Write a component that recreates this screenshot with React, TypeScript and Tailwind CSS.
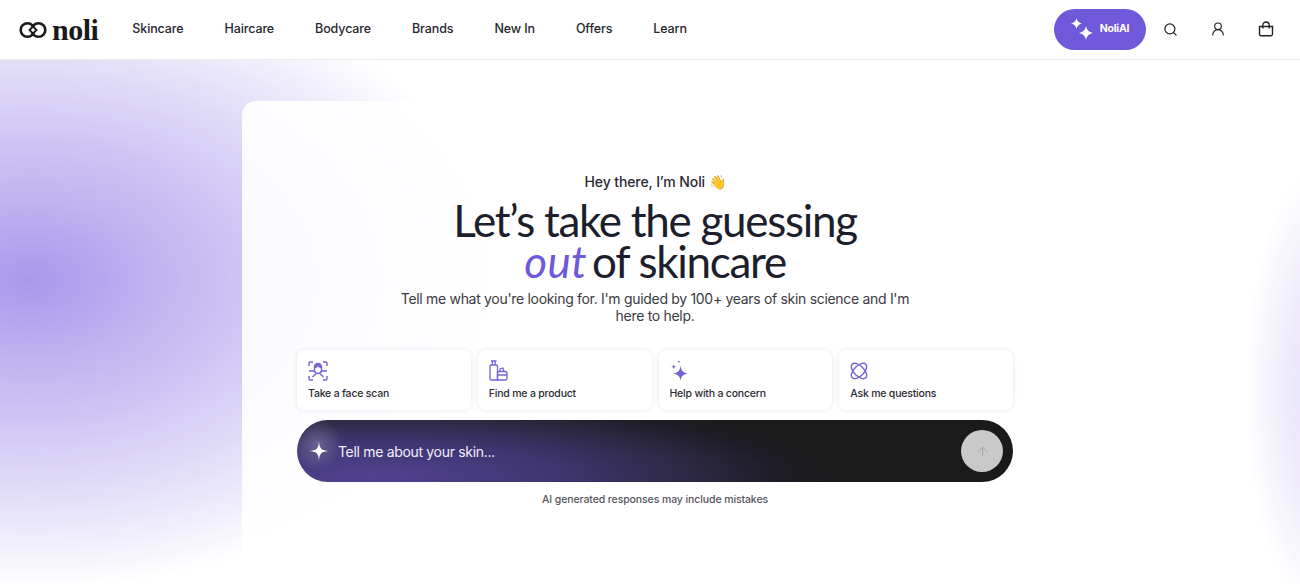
import { Search, UserRound, ArrowUp } from "lucide-react";

const NAV = ["Skincare", "Haircare", "Bodycare", "Brands", "New In", "Offers", "Learn"];

function Sparkle({ className }: { className?: string }) {
  return (
    <svg viewBox="0 0 24 24" className={className} fill="currentColor">
      <path d="M12 0C12.400 9 15 11.600 24 12 15 12.400 12.400 15 12 24 11.600 15 9 12.400 0 12 9 11.600 11.600 9 12 0z" />
    </svg>
  );
}

function FatSparkle({ className }: { className?: string }) {
  return (
    <svg viewBox="0 0 24 24" className={className} fill="currentColor">
      <path d="M12 0c1.200 6.500 4.500 10.300 12 12-7.500 1.700-10.800 5.500-12 12-1.200-6.500-4.500-10.300-12-12 7.500-1.700 10.800-5.500 12-12z" />
    </svg>
  );
}

function Logo() {
  return (
    <div className="flex items-center gap-[5px]">
      <svg width="28" height="18" viewBox="0 0 28 18" fill="none" stroke="#1a1a1a" strokeWidth="2.600">
        <circle cx="8.500" cy="9" r="6.800" />
        <circle cx="19.500" cy="9" r="6.800" />
        <path d="M14 5.500 17.500 9 14 12.500 10.500 9z" fill="#fff" strokeWidth="1.800" />
      </svg>
      <span className="font-['Liberation_Serif',serif] text-[30px] leading-none font-bold tracking-[-0.5px] text-[#1a1a1a]">
        noli
      </span>
    </div>
  );
}

function BagIcon() {
  return (
    <svg width="16" height="16" viewBox="0 0 16 16" fill="none" stroke="#222" strokeWidth="1.400">
      <path d="M1.500 5.500h13v7.500a1.800 1.800 0 0 1-1.800 1.800H3.300A1.800 1.800 0 0 1 1.500 13z" />
      <path d="M4.800 7.500V4.200a3.200 3.200 0 0 1 6.400 0v3.300" />
    </svg>
  );
}

function FaceIcon() {
  return (
    <svg width="20" height="20" viewBox="0 0 20 20" fill="none" stroke="#7563d6" strokeWidth="1.400">
      <path d="M1 5V2.300A1.300 1.300 0 0 1 2.300 1H5M15 1h2.700A1.300 1.300 0 0 1 19 2.300V5M1 15v2.700A1.300 1.300 0 0 0 2.300 19H5M15 19h2.700a1.300 1.300 0 0 0 1.300-1.300V15" />
      <path d="M6.500 6a3.500 3.500 0 0 1 7 0v3a3.500 3.500 0 0 1-7 0z" />
      <path d="M6.500 7.200C8.500 7 9.500 6.300 10 5.200c.5 1.100 1.500 1.800 3.500 2V5L12 2.800H8L6.500 5z" fill="#7563d6" stroke="none" />
      <path d="M1 10h4.800l1.700 1.500M19 10h-4.800l-1.700 1.500M4.500 16l3.500-3.200M15.500 16 12 12.800" />
    </svg>
  );
}

function BottleIcon() {
  return (
    <svg width="19" height="21" viewBox="0 0 19 21" fill="none" stroke="#7563d6" strokeWidth="1.300">
      <path d="M2 1h5.500M3.300 1v4M6.200 1v4" />
      <path d="M2.300 5h4.900A1.300 1.300 0 0 1 8.500 6.300v5.200A2 2 0 0 0 8.500 13v7H2.300A1.300 1.300 0 0 1 1 18.700V6.300A1.300 1.300 0 0 1 2.300 5z" />
      <path d="M8.500 13.500a2 2 0 0 1 2-2h6A1.500 1.500 0 0 1 18 13v5.500a1.500 1.500 0 0 1-1.500 1.500h-8z" />
      <path d="M11 11.500V9l3-1 .8 3.500M8.500 15h9.500" />
    </svg>
  );
}

function StarsIcon() {
  return (
    <svg width="19" height="21" viewBox="0 0 19 21" fill="#7563d6">
      <path d="M10.500 5.500c.5 5 2.400 7.400 8 8-5.600.6-7.500 3-8 7.500-.5-4.500-2.400-6.900-8-7.500 5.600-.6 7.500-3 8-8z" />
      <path d="M3.700 4c.2 1.800.8 2.500 2.700 2.700C4.500 6.900 3.900 7.600 3.700 9.400 3.500 7.600 2.900 6.900 1 6.700 2.900 6.500 3.500 5.800 3.700 4z" />
      <path d="M9 .3c.1 1 .5 1.400 1.500 1.500C9.500 1.900 9.100 2.300 9 3.300 8.900 2.300 8.500 1.900 7.500 1.800 8.500 1.700 8.900 1.300 9 .3z" />
    </svg>
  );
}

function AtomIcon() {
  return (
    <svg width="18" height="18" viewBox="0 0 18 18" fill="none" stroke="#7563d6" strokeWidth="1.400">
      <ellipse cx="9" cy="9" rx="5" ry="9.600" transform="rotate(45 9 9)" />
      <ellipse cx="9" cy="9" rx="5" ry="9.600" transform="rotate(-45 9 9)" />
    </svg>
  );
}

const ACTIONS = [
  { label: "Take a face scan", icon: <FaceIcon /> },
  { label: "Find me a product", icon: <BottleIcon /> },
  { label: "Help with a concern", icon: <StarsIcon /> },
  { label: "Ask me questions", icon: <AtomIcon /> },
];

export default function App() {
  return (
    <div className="relative h-[584px] w-full overflow-hidden bg-white font-['Inter',sans-serif] text-[#1c1c24]">
      <header className="flex h-[60px] items-center border-b border-[#ececec] bg-white pr-[26px] pl-[19px]">
        <Logo />
        <nav className="ml-[34px] flex items-center gap-[41px] text-[12.500px] font-medium tracking-[-0.12px] text-[#26262c]">
          {NAV.map((item) => (
            <span key={item}>{item}</span>
          ))}
        </nav>
        <div className="-mt-[1px] ml-auto flex items-center">
          <div className="flex h-[41px] w-[92px] items-center justify-center gap-[7px] rounded-full bg-[#6f58d9] text-[10.500px] font-bold tracking-[-0.2px] text-white">
            <div className="relative h-[22px] w-[22px]">
              <FatSparkle className="absolute top-0 left-0 h-[11px] w-[11px]" />
              <FatSparkle className="absolute right-0 bottom-0 h-[14px] w-[14px]" />
            </div>
            <span>NoliAI</span>
          </div>
          <Search size={15} strokeWidth={2} className="ml-[17px] text-[#222]" />
          <UserRound size={16} strokeWidth={1.700} className="ml-[32px] text-[#222]" />
          <div className="ml-[32px]">
            <BagIcon />
          </div>
        </div>
      </header>

      <main className="relative h-[524px] overflow-hidden">
        <div className="absolute inset-0 bg-[radial-gradient(ellipse_480px_310px_at_30px_220px,#a898ec_0%,#bfb2f0_25%,#cfc5f4_45%,#e0daf8_66%,#f0edfb_84%,#ffffff_100%)]" />
        <div className="absolute inset-0 bg-[radial-gradient(ellipse_80px_230px_at_1325px_330px,#e4dff8_0%,#efebfb_50%,rgba(255,255,255,0)_100%)]" />
        <section className="relative mt-[41px] ml-[242px] flex h-[483px] w-[998px] flex-col items-center rounded-tl-[14px] bg-white/90 pt-[71px] pr-[227px] pl-[55px]">
          <p className="text-[14px] leading-[20px] font-medium tracking-[-0.1px] text-[#2a2a32]">
            Hey there, I’m Noli 👋
          </p>
          <h1 className="mt-[8px] h-[82px] text-center font-['Lato',sans-serif] text-[44px] leading-[41px] font-normal tracking-[-1.300px] whitespace-nowrap text-[#1d1e2b]">
            Let’s take the guessing
            <br />
            <em className="tracking-[0.4px] text-[#6f58d9]">out</em>
            <span className="ml-[-5px]"> of skincare</span>
          </h1>
          <p className="mt-[8px] w-[520px] text-center text-[14px] leading-[17px] tracking-[-0.310px] text-[#3a3a42]">
            Tell me what you're looking for. I'm guided by 100+ years of skin science and I'm here to help.
          </p>
          <div className="mt-[26px] grid w-full grid-cols-4 gap-[7px]">
            {ACTIONS.map((a) => (
              <div
                key={a.label}
                className="flex h-[60px] flex-col justify-between rounded-[8px] bg-white px-[11px] pt-[10px] pb-[10px] shadow-[0_0_5px_rgba(70,60,140,0.13)]"
              >
                <div className="flex h-[21px] items-center">{a.icon}</div>
                <span className="text-[10.500px] leading-[13px] font-medium tracking-[-0.2px] text-[#2b2b33]">
                  {a.label}
                </span>
              </div>
            ))}
          </div>
          <div className="mt-[10px] flex h-[62px] w-full items-center rounded-full bg-[radial-gradient(circle_26px_at_20px_24px,rgba(255,255,255,0.22),rgba(255,255,255,0)),radial-gradient(ellipse_470px_85px_at_75px_56px,#514290_0%,#3f3570_40%,#2b2740_70%,#1e1d26_86%,#1a1a1a_100%)] pr-[10px] pl-[12px]">
            <Sparkle className="h-[20px] w-[20px] text-white" />
            <span className="ml-[9px] text-[14px] tracking-[-0.320px] text-[#f2f0fa]">Tell me about your skin...</span>
            <div className="ml-auto flex h-[42px] w-[42px] items-center justify-center rounded-full bg-[#c9c9c9]">
              <ArrowUp size={15} strokeWidth={1.500} className="text-[#a3a3a3]" />
            </div>
          </div>
          <p className="mt-[11px] text-[10.500px] leading-[14px] font-medium tracking-[-0.1px] text-[#55555c]">
            AI generated responses may include mistakes
          </p>
        </section>
      </main>
    </div>
  );
}
